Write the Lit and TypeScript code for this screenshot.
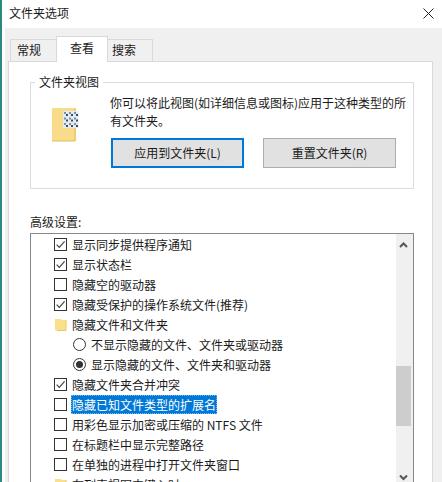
import { LitElement, html, css, svg } from "lit";
import { customElement } from "lit/decorators.js";

type Row = { kind: "check" | "radio" | "folder"; label: string; on?: boolean; selected?: boolean };

const rows: Row[] = [
  { kind: "check", label: "显示同步提供程序通知", on: true },
  { kind: "check", label: "显示状态栏", on: true },
  { kind: "check", label: "隐藏空的驱动器" },
  { kind: "check", label: "隐藏受保护的操作系统文件(推荐)", on: true },
  { kind: "folder", label: "隐藏文件和文件夹" },
  { kind: "radio", label: "不显示隐藏的文件、文件夹或驱动器" },
  { kind: "radio", label: "显示隐藏的文件、文件夹和驱动器", on: true },
  { kind: "check", label: "隐藏文件夹合并冲突", on: true },
  { kind: "check", label: "隐藏已知文件类型的扩展名", selected: true },
  { kind: "check", label: "用彩色显示加密或压缩的 NTFS 文件" },
  { kind: "check", label: "在标题栏中显示完整路径" },
  { kind: "check", label: "在单独的进程中打开文件夹窗口" },
  { kind: "folder", label: "在列表视图中键入时" },
];

const gridCells = [0, 1, 2].flatMap((r) =>
  [0, 1, 2].map((c) => {
    const x = 1 + c * 5;
    const y = 1 + r * 5.5;
    return svg`<rect x=${x} y=${y} width="2" height="2" fill="#6f93bd"></rect>
      <rect x=${x + 2} y=${y + 2} width="2" height="2" fill="#3f4a55"></rect>`;
  })
);

@customElement("app-root")
export class AppRoot extends LitElement {
  static styles = css`
    :host {
      display: block;
      width: 442px;
      height: 482px;
      overflow: hidden;
      background: #fff;
      color: #1a1a1a;
      font-size: 12px;
      line-height: 20px;
      font-family: "Noto Sans CJK SC", sans-serif;
    }
    .window {
      height: 482px;
      box-sizing: border-box;
      border-left: 2px solid #2b8a80;
      display: flex;
      flex-direction: column;
    }
    .title {
      height: 28px;
      flex: none;
      display: flex;
      align-items: center;
      justify-content: space-between;
      padding: 0 7px 2px 7px;
      box-sizing: border-box;
    }
    .close { width: 11px; height: 11px; margin-right: 1px; display: block; }
    .body {
      flex: 1;
      min-height: 0;
      margin-left: 3px;
      background: #f0f0f0;
      padding: 9px 9px 0 3px;
      display: flex;
      flex-direction: column;
    }
    .tabs {
      height: 24px;
      flex: none;
      display: flex;
      align-items: flex-end;
      padding-left: 2px;
      position: relative;
      z-index: 1;
    }
    .tab {
      box-sizing: border-box;
      height: 22px;
      border: 1px solid #d9d9d9;
      border-bottom: none;
      line-height: 20px;
      background: #f0f0f0;
    }
    .tab.first { width: 46px; border-right: none; padding-left: 6px; }
    .tab.active {
      width: 52px;
      height: 26px;
      line-height: 21px;
      text-align: center;
      background: #fff;
      margin-bottom: -1px;
    }
    .tab.last { width: 45px; border-left: none; padding-left: 4px; }
    .panel {
      flex: 1;
      min-height: 0;
      background: #fff;
      border: 1px solid #d9d9d9;
      border-bottom: none;
      padding: 20px 18px 0 21px;
      display: flex;
      flex-direction: column;
    }
    .group {
      flex: none;
      height: 107px;
      box-sizing: border-box;
      border: 1px solid #dcdcdc;
      position: relative;
      display: flex;
      padding: 11px 0 0 20px;
    }
    .legend {
      position: absolute;
      left: 4px;
      top: -11px;
      padding: 0 4px;
      line-height: 20px;
      background: #fff;
    }
    .folder-big { width: 28px; height: 35px; margin-top: 13px; flex: none; display: block; }
    .group-main { margin-left: 31px; width: 298px; }
    .desc { margin: 0; line-height: 18px; }
    .buttons { display: flex; gap: 19px; margin: 8px 0 0 1px; }
    .btn {
      box-sizing: border-box;
      width: 133px;
      height: 30px;
      background: #e1e1e1;
      border: 1px solid #adadad;
      display: flex;
      align-items: center;
      justify-content: center;
    }
    .btn.primary { border: 2px solid #0078d7; }
    .adv-label { margin-top: 23px; line-height: 20px; flex: none; }
    .list {
      margin-top: 1px;
      flex: 1;
      min-height: 0;
      border: 1px solid #828790;
      border-bottom: none;
      display: flex;
      overflow: hidden;
    }
    .items { flex: 1; padding: 0 0 0 23px; overflow: hidden; }
    .row { height: 20px; display: flex; align-items: center; white-space: nowrap; }
    .row.radio { padding-left: 19px; }
    .box {
      width: 13px;
      height: 13px;
      box-sizing: border-box;
      border: 1px solid #333;
      flex: none;
      display: block;
    }
    .round {
      width: 13px;
      height: 13px;
      box-sizing: border-box;
      border: 1px solid #333;
      border-radius: 50%;
      flex: none;
      display: flex;
      align-items: center;
      justify-content: center;
    }
    .round.on::after {
      content: "";
      width: 7px;
      height: 7px;
      border-radius: 50%;
      background: #333;
    }
    .mini { width: 13px; height: 13px; flex: none; display: block; }
    .label { margin-left: 4px; padding: 0 1px; line-height: 19px; height: 19px; }
    .label.sel {
      background: #0078d7;
      color: #fff;
      outline: 1px dotted #7fb5e3;
      outline-offset: -1px;
    }
    .scroll {
      width: 17px;
      flex: none;
      background: #f0f0f0;
      display: flex;
      flex-direction: column;
      align-items: flex-start;
    }
    .arrow { width: 15px; height: 17px; flex: none; display: block; }
    .arrow.up { margin-top: 2px; }
    .arrow.down { margin-top: 43px; }
    .thumb { width: 15px; height: 60px; margin-top: 113px; background: #cdcdcd; flex: none; }
  `;

  private renderRow(r: Row) {
    let mark;
    if (r.kind === "check") {
      mark = html`<svg class="box" viewBox="0 0 11 11">
        ${r.on ? svg`<path d="M1.6 5.6 L4.3 8.3 L9.6 2.4" fill="none" stroke="#444" stroke-width="1.2"></path>` : ""}
      </svg>`;
    } else if (r.kind === "radio") {
      mark = html`<span class="round ${r.on ? "on" : ""}"></span>`;
    } else {
      mark = html`<svg class="mini" viewBox="0 0 13 13">
        <path d="M1 1 H7 L8 2 H12 V12.5 H1 Z" fill="#fbe08c"></path>
        <path d="M12 2 V12.5 H3" fill="none" stroke="#e9c86a" stroke-width="1"></path>
      </svg>`;
    }
    return html`<div class="row ${r.kind}">
      ${mark}<span class="label ${r.selected ? "sel" : ""}">${r.label}</span>
    </div>`;
  }

  render() {
    return html`<div class="window">
      <div class="title">
        <span>文件夹选项</span>
        <svg class="close" viewBox="0 0 11 11">
          <path d="M0.5 0.5 L10.5 10.5 M10.5 0.5 L0.5 10.5" stroke="#222" stroke-width="1" fill="none"></path>
        </svg>
      </div>
      <div class="body">
        <div class="tabs">
          <div class="tab first">常规</div>
          <div class="tab active">查看</div>
          <div class="tab last">搜索</div>
        </div>
        <div class="panel">
          <div class="group">
            <span class="legend">文件夹视图</span>
            <svg class="folder-big" viewBox="0 0 28 35">
              <rect x="1" y="1" width="24" height="33" fill="#f9dc8a"></rect>
              <path d="M24 1 V34 H1" fill="none" stroke="#e2bd62" stroke-width="1"></path>
              <rect x="12" y="4" width="15.5" height="17" fill="#e6ebf0"></rect>
              <g transform="translate(12 4)">${gridCells}</g>
            </svg>
            <div class="group-main">
              <p class="desc">你可以将此视图(如详细信息或图标)应用于这种类型的所有文件夹。</p>
              <div class="buttons">
                <div class="btn primary">应用到文件夹(L)</div>
                <div class="btn">重置文件夹(R)</div>
              </div>
            </div>
          </div>
          <div class="adv-label">高级设置:</div>
          <div class="list">
            <div class="items">${rows.map((r) => this.renderRow(r))}</div>
            <div class="scroll">
              <svg class="arrow up" viewBox="0 0 15 17">
                <path d="M4 11 L7.5 7.5 L11 11" fill="none" stroke="#555" stroke-width="2"></path>
              </svg>
              <div class="thumb"></div>
              <svg class="arrow down" viewBox="0 0 15 17">
                <path d="M4 6.5 L7.5 10 L11 6.5" fill="none" stroke="#555" stroke-width="2"></path>
              </svg>
            </div>
          </div>
        </div>
      </div>
    </div>`;
  }
}
